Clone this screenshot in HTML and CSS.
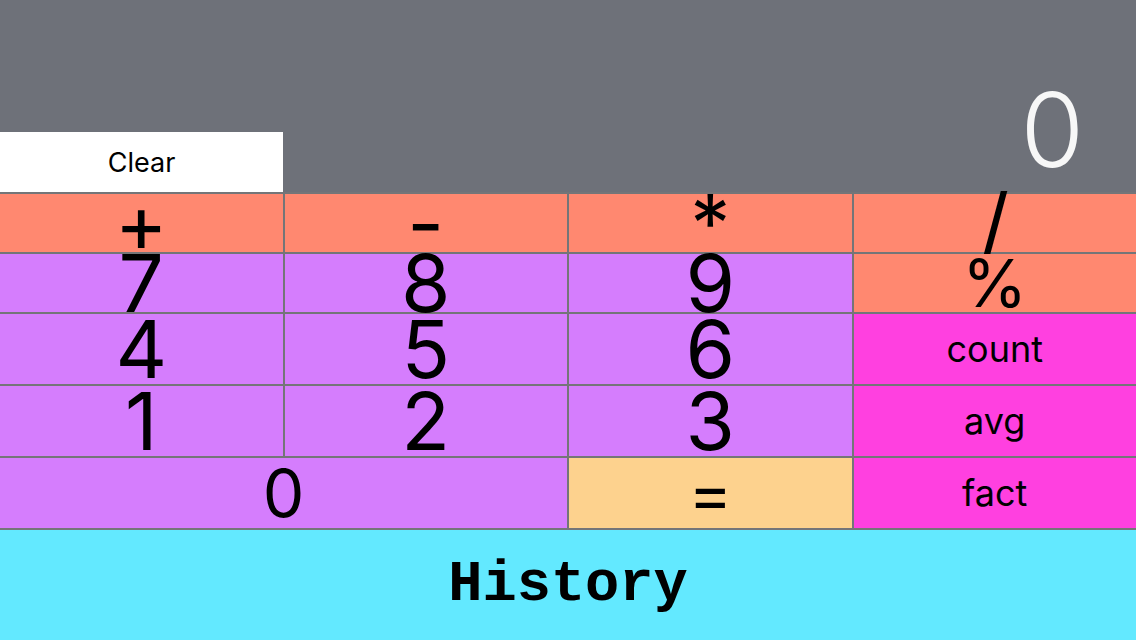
FILE: index.html
```html
<!DOCTYPE html>
<html lang="en">
<head>
  <meta charset="UTF-8">
  <meta name="viewport" content="width=device-width, initial-scale=1.0">
  <title>Calculator</title>
  <link rel="stylesheet" href="styles.css">
</head>
<body>
  <div class="app">
    <div class="display">
      <button class="clear-btn">Clear</button>
      <div class="result">0</div>
    </div>
    <div class="keypad">
      <button class="key op">+</button>
      <button class="key op">-</button>
      <button class="key op">*</button>
      <button class="key op">/</button>

      <button class="key num">7</button>
      <button class="key num">8</button>
      <button class="key num">9</button>
      <button class="key op small">%</button>

      <button class="key num">4</button>
      <button class="key num">5</button>
      <button class="key num">6</button>
      <button class="key fn">count</button>

      <button class="key num">1</button>
      <button class="key num">2</button>
      <button class="key num">3</button>
      <button class="key fn">avg</button>

      <button class="key num small wide">0</button>
      <button class="key eq small">=</button>
      <button class="key fn">fact</button>
    </div>
    <button class="history-btn">History</button>
  </div>
</body>
</html>
```

FILE: styles.css
```css
body {
  margin: 0;
  font-family: 'Inter', 'Liberation Sans', sans-serif;
  background-color: #6e7179;
}

.app {
  display: flex;
  flex-direction: column;
  height: 640px;
  overflow: hidden;
}

button {
  font-family: inherit;
  border: none;
  margin: 0;
  padding: 0;
  color: #000;
  cursor: pointer;
}

.display {
  height: 192px;
  display: flex;
  align-items: flex-end;
  justify-content: space-between;
  background-color: #6e7179;
}

.clear-btn {
  width: 283px;
  height: 60px;
  background-color: #ffffff;
  font-size: 27px;
}

.result {
  color: #f7f7f7;
  font-size: 103px;
  font-weight: 300;
  line-height: 125px;
  padding-right: 52px;
}

.keypad {
  display: grid;
  grid-template-columns: repeat(4, 1fr);
  grid-template-rows: 58px 58px 70px 70px 70px;
  gap: 2px;
  padding: 2px 0;
  background-color: #747578;
}

/* glyphs spill over the cell edges like the original; keep the line box small */
.key {
  display: flex;
  align-items: center;
  justify-content: center;
  overflow: visible;
  font-size: 80px;
  line-height: 50px;
}

.op {
  background-color: #ff8870;
}

.num {
  background-color: #d57dfd;
}

.fn {
  background-color: #ff40e0;
  font-size: 36px;
  line-height: 44px;
}

.eq {
  background-color: #fdd28e;
}

.small {
  font-size: 66px;
}

.wide {
  grid-column: span 2;
}

.history-btn {
  flex: 1;
  background-color: #63e9ff;
  font-family: 'Liberation Mono', monospace;
  font-weight: 700;
  font-size: 57px;
}
```
